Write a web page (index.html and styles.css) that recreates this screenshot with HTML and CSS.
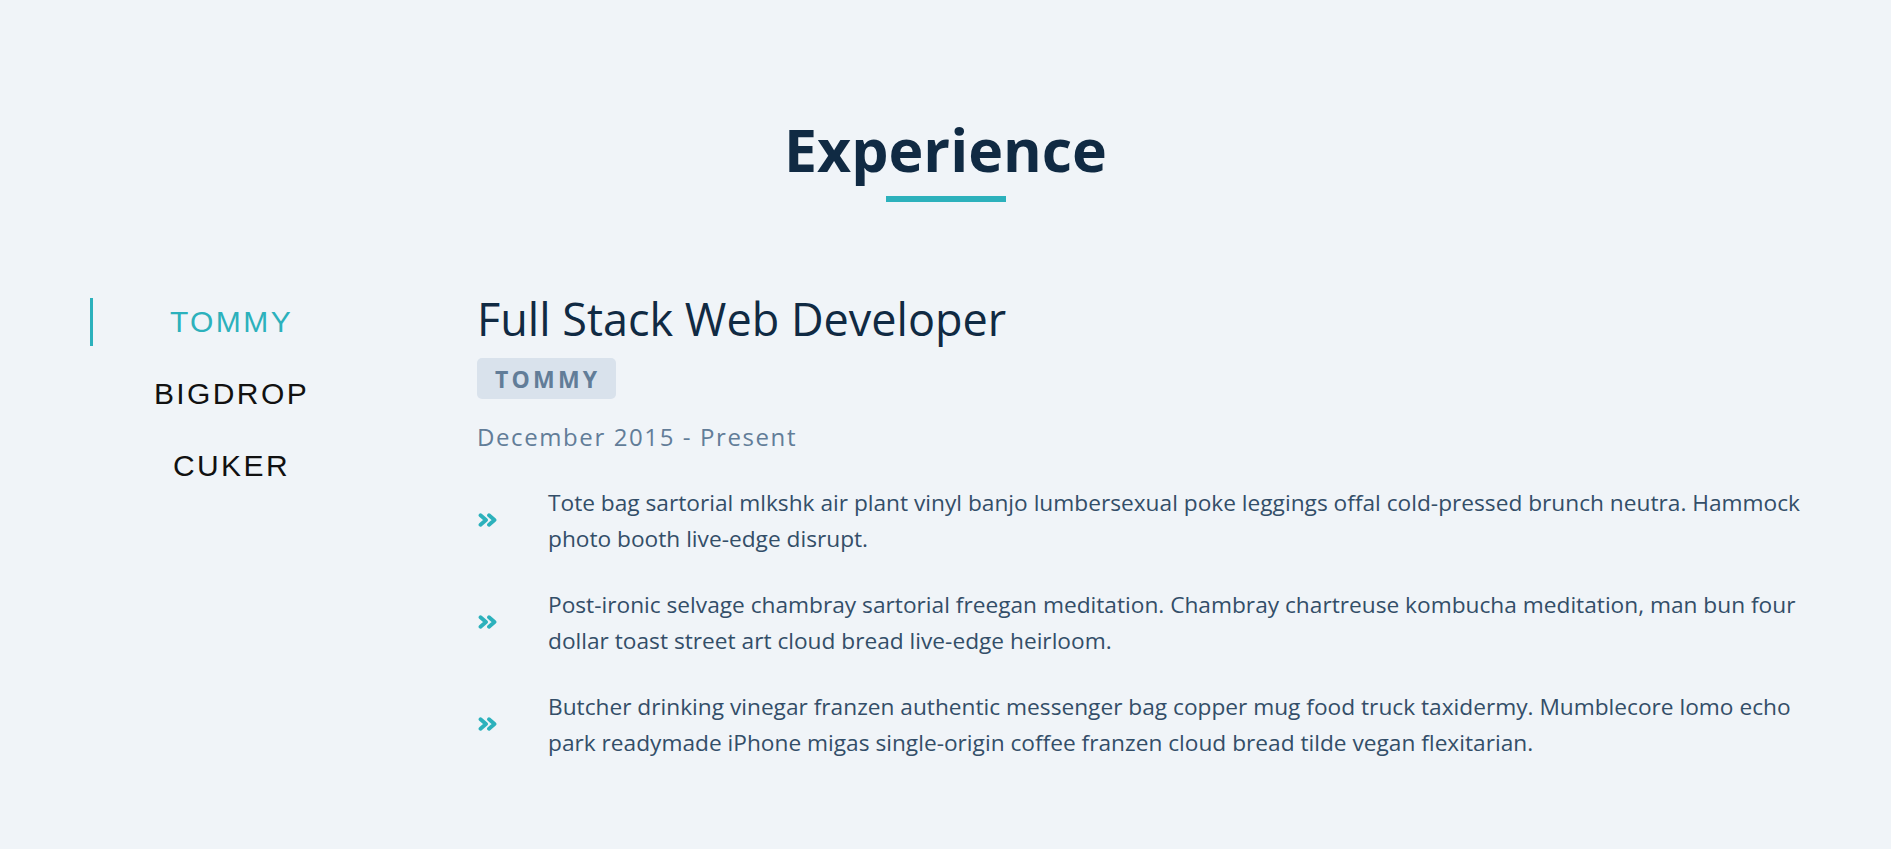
FILE: index.html
```html
<!DOCTYPE html>
<html lang="en">
<head>
<meta charset="utf-8">
<title>Experience</title>
<link rel="stylesheet" href="styles.css">
</head>
<body>
<section class="experience">
  <h2 class="section-title">Experience</h2>
  <div class="exp-body">
    <ul class="company-tabs">
      <li class="tab active">TOMMY</li>
      <li class="tab">BIGDROP</li>
      <li class="tab">CUKER</li>
    </ul>
    <div class="job">
      <h3 class="job-title">Full Stack Web Developer</h3>
      <span class="badge">TOMMY</span>
      <p class="date">December 2015 - Present</p>
      <ul class="duties">
        <li class="duty">
          <svg class="chev" viewBox="0 0 20 14" width="20" height="14"><path d="M2.5 2.2l5.5 4.8-5.5 4.8M11 2.2l5.5 4.8-5.5 4.8"/></svg>
          <p>Tote bag sartorial mlkshk air plant vinyl banjo lumbersexual poke leggings offal cold-pressed brunch neutra. Hammock photo booth live-edge disrupt.</p>
        </li>
        <li class="duty">
          <svg class="chev" viewBox="0 0 20 14" width="20" height="14"><path d="M2.5 2.2l5.5 4.8-5.5 4.8M11 2.2l5.5 4.8-5.5 4.8"/></svg>
          <p>Post-ironic selvage chambray sartorial freegan meditation. Chambray chartreuse kombucha meditation, man bun four dollar toast street art cloud bread live-edge heirloom.</p>
        </li>
        <li class="duty">
          <svg class="chev" viewBox="0 0 20 14" width="20" height="14"><path d="M2.5 2.2l5.5 4.8-5.5 4.8M11 2.2l5.5 4.8-5.5 4.8"/></svg>
          <p>Butcher drinking vinegar franzen authentic messenger bag copper mug food truck taxidermy. Mumblecore lomo echo park readymade iPhone migas single-origin coffee franzen cloud bread tilde vegan flexitarian.</p>
        </li>
      </ul>
    </div>
  </div>
</section>
</body>
</html>
```

FILE: styles.css
```css
* { box-sizing: border-box; }
html, body { margin: 0; padding: 0; }
body {
  background: #f0f4f8;
  font-family: "Open Sans", "Noto Sans", sans-serif;
  color: #334e68;
  min-height: 849px;
}
.experience { padding-top: 114px; }
.section-title {
  margin: 0;
  text-align: center;
  font-size: 59px;
  line-height: 1.2;
  font-weight: 700;
  color: #102a43;
}
.section-title::after {
  content: "";
  display: block;
  width: 120px;
  height: 6px;
  margin: 11px auto 0;
  background: #2cb1bc;
}
.exp-body {
  display: grid;
  grid-template-columns: 280px 1fr;
  column-gap: 107px;
  align-items: start;
  margin-top: 90px;
  padding: 0 66px 0 90px;
}
.company-tabs {
  list-style: none;
  margin: 6px 0 0;
  padding: 0;
}
.tab {
  font-family: "Liberation Sans", Arial, sans-serif;
  font-size: 30px;
  line-height: 48px;
  letter-spacing: 2.4px;
  text-align: center;
  color: #111;
  border-left: 3px solid transparent;
  margin-bottom: 24px;
}
.tab.active { color: #2cb1bc; border-left-color: #2cb1bc; }
.job-title {
  margin: 0;
  font-size: 45px;
  line-height: 54px;
  font-weight: 400;
  color: #102a43;
}
.badge {
  display: block;
  width: fit-content;
  margin-top: 12px;
  height: 41px;
  padding: 2px 16px 0 18px;
  line-height: 39px;
  border-radius: 5px;
  background: #d9e2ec;
  color: #627d98;
  font-weight: 700;
  font-size: 23px;
  letter-spacing: 3.2px;
}
.date {
  margin: 20px 0 0;
  font-size: 24px;
  line-height: 36px;
  letter-spacing: 1.6px;
  color: #627d98;
}
.duties { list-style: none; margin: 30px 0 0; padding: 0; }
.duty {
  display: grid;
  grid-template-columns: 71px 1fr;
  align-items: center;
  margin-bottom: 30px;
}
.duty p { margin: 0; font-size: 22.7px; line-height: 36px; }
.chev { display: block; margin-left: 1px; margin-top: -2px; }
.chev path { fill: none; stroke: #2cb1bc; stroke-width: 3.8; stroke-linecap: round; stroke-linejoin: round; }
```
